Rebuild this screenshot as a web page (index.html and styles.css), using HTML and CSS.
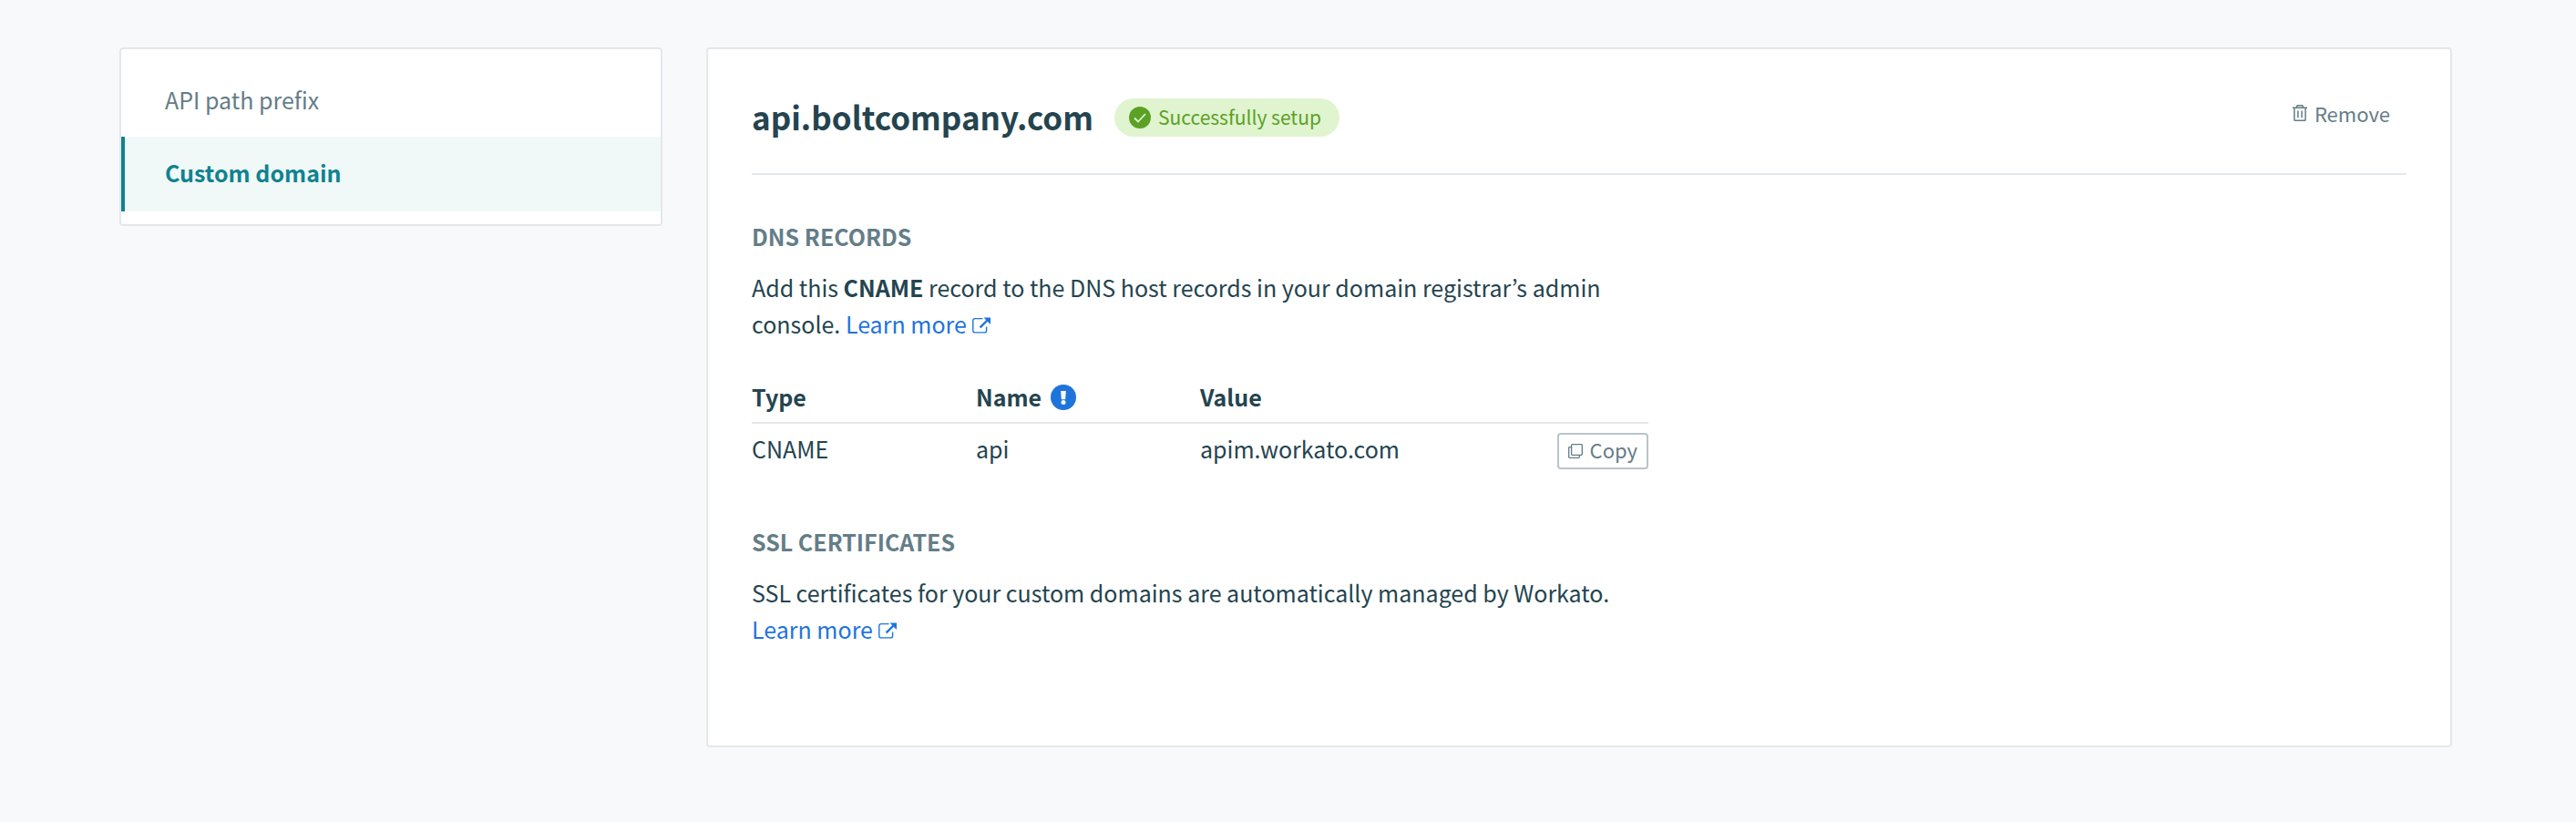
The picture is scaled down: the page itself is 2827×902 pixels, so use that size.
FILE: index.html
```html
<!DOCTYPE html>
<html lang="en">
<head>
<meta charset="utf-8">
<title>Custom domain</title>
<link rel="stylesheet" href="styles.css">
</head>
<body>
<div class="page">
  <nav class="card sidebar" aria-label="API settings">
    <a class="nav-item" href="#prefix">API path prefix</a>
    <a class="nav-item active" href="#domain" aria-current="page">Custom domain</a>
  </nav>
  <main class="card panel">
    <header class="panel-header">
      <h1 class="title">api.boltcompany.com</h1>
      <span class="badge">
        <svg class="badge-icon" viewBox="0 0 24 24" aria-hidden="true"><circle cx="12" cy="12" r="12" fill="#5aa125"/><path d="M6 12.5l4 4L18 8" fill="none" stroke="#e0f4d0" stroke-width="1.8"/></svg>
        Successfully setup
      </span>
      <button class="remove" type="button">
        <svg class="trash-icon" viewBox="0 0 16 18" aria-hidden="true" fill="none" stroke="currentColor" stroke-width="1.5"><path d="M0 3.3h16M4 3.3l1.2-2.6h5.6L12 3.3M1.9 3.3v13q0 1 1 1h10.2q1 0 1-1v-13M5.9 6.5v7.8M10.1 6.5v7.8"/></svg>
        Remove
      </button>
    </header>
    <section class="section">
      <h2 class="section-title">DNS RECORDS</h2>
      <p class="text">Add this <strong>CNAME</strong> record to the DNS host records in your domain registrar’s admin console. <a class="link" href="#dns-help">Learn more<svg class="link-icon" viewBox="0 0 20 18" aria-hidden="true"><path d="M11.5 1.6H3Q.8 1.6.8 3.8v10.9q0 2.2 2.2 2.2h10.4q2.2 0 2.2-2.2V10.5" fill="none" stroke="currentColor" stroke-width="1.4"/><path d="M8.6 11.4L17 3" stroke="currentColor" stroke-width="2.4"/><path d="M12.5.4H20v7.5z" fill="currentColor"/></svg></a></p>
      <table class="records">
        <thead>
          <tr>
            <th>Type</th>
            <th><span class="with-icon">Name <svg class="info-icon" viewBox="0 0 28 28" role="img" aria-label="Info"><circle cx="14" cy="14" r="14" fill="#1f74dc"/><path d="M11.2 7h5.6l-.6 9.2h-4.4z" fill="#fff"/><circle cx="14" cy="19.6" r="2.5" fill="#fff"/></svg></span></th>
            <th colspan="2">Value</th>
          </tr>
        </thead>
        <tbody>
          <tr>
            <td>CNAME</td>
            <td>api</td>
            <td>apim.workato.com</td>
            <td class="action">
              <button class="copy" type="button">
                <svg class="copy-icon" viewBox="0 0 16 16" aria-hidden="true" fill="none" stroke="currentColor" stroke-width="1.3"><rect x="3.6" y=".7" width="11.7" height="11.7" rx=".8"/><path d="M3.6 3.6H1.5q-.8 0-.8.8v10.1q0 .8.8.8h10.1q.8 0 .8-.8v-2.1"/></svg>
                Copy
              </button>
            </td>
          </tr>
        </tbody>
      </table>
    </section>
    <section class="section">
      <h2 class="section-title">SSL CERTIFICATES</h2>
      <p class="text">SSL certificates for your custom domains are automatically managed by Workato. <a class="link" href="#ssl-help">Learn more<svg class="link-icon" viewBox="0 0 20 18" aria-hidden="true"><path d="M11.5 1.6H3Q.8 1.6.8 3.8v10.9q0 2.2 2.2 2.2h10.4q2.2 0 2.2-2.2V10.5" fill="none" stroke="currentColor" stroke-width="1.4"/><path d="M8.6 11.4L17 3" stroke="currentColor" stroke-width="2.4"/><path d="M12.5.4H20v7.5z" fill="currentColor"/></svg></a></p>
    </section>
  </main>
</div>
</body>
</html>
```
FILE: styles.css
```css
* {
  box-sizing: border-box;
}

body {
  margin: 0;
  background: #f8f9fb;
  color: #24444f;
  font-family: "Noto Sans CJK KR", "Noto Sans", sans-serif;
  font-size: 25px;
  line-height: 40px;
}

.page {
  display: grid;
  grid-template-columns: 596px 1fr;
  align-items: start;
  gap: 48px;
  padding: 52px 136px 48px 131px;
}

.card {
  background: #fff;
  border: 2px solid #e4e8eb;
  border-radius: 4px;
}

.sidebar {
  display: flex;
  flex-direction: column;
  padding: 16px 0 14px;
}

.nav-item {
  padding: 19px 44px 21px;
  border-left: 4px solid transparent;
  color: #647d88;
  text-decoration: none;
}

.nav-item.active {
  padding-bottom: 23px;
  border-left-color: #108291;
  background: #f0f9f8;
  color: #108291;
  font-weight: 700;
}

.panel {
  padding: 48px 48px 108px;
}

.panel-header {
  display: flex;
  align-items: center;
  padding-bottom: 34px;
  border-bottom: 2px solid #e4e8eb;
}

.title {
  margin: 0;
  padding-bottom: 2px;
  font-size: 35px;
  font-weight: 700;
  line-height: 52px;
}

.badge {
  display: flex;
  align-items: center;
  gap: 8px;
  margin-left: 23px;
  padding: 0 20px 2px 16px;
  border-radius: 21px;
  background: #e0f4d0;
  color: #5aa125;
  font-size: 21px;
}

.badge-icon {
  width: 24px;
  height: 24px;
  margin-top: 2px;
}

.remove,
.copy {
  display: flex;
  align-items: center;
  border: 0;
  background: none;
  color: #647d88;
  font-family: inherit;
  font-size: 22px;
  line-height: 32px;
}

.remove {
  gap: 8px;
  margin-left: auto;
  padding: 0 18px 10px;
}

.trash-icon {
  width: 16px;
  height: 18px;
}

.section {
  max-width: 984px;
  margin-top: 47px;
}

.section-title {
  margin: 0 0 16px;
  color: #647d88;
  font-size: 25px;
  font-weight: 700;
  line-height: 40px;
}

.text {
  margin: 0;
}

.link {
  color: #1f74dc;
  text-decoration: none;
  white-space: nowrap;
}

.link-icon {
  width: 20px;
  height: 18px;
  margin-left: 6px;
}

.records {
  width: 100%;
  margin-top: 40px;
  border-collapse: collapse;
  table-layout: fixed;
}

.records th {
  padding: 0 0 8px;
  border-bottom: 2px solid #e4e8eb;
  font-weight: 700;
  text-align: left;
}

.records td {
  padding: 6px 0 14px;
  white-space: nowrap;
}

.with-icon {
  display: flex;
  align-items: center;
  gap: 10px;
}

.info-icon {
  width: 28px;
  height: 28px;
  margin-top: 2px;
}

.records .action {
  padding: 10px 0 12px;
}

.copy {
  gap: 8px;
  margin-left: auto;
  padding: 0 10px 4px;
  border: 2px solid #b9c4ca;
  border-radius: 4px;
}

.copy-icon {
  width: 16px;
  height: 16px;
  margin-top: 4px;
}
```
